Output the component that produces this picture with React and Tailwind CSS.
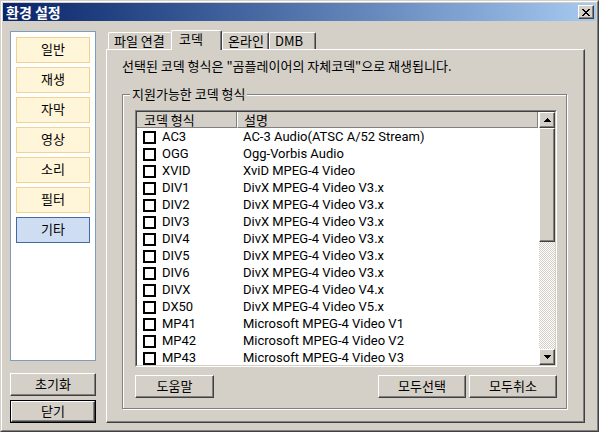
import { useState } from "react";

const categories = ["일반", "재생", "자막", "영상", "소리", "필터", "기타"];

const tabs = [
  { name: "파일 연결", width: "w-[63px]" },
  { name: "코덱", width: "w-[51px]" },
  { name: "온라인", width: "w-[47px]" },
  { name: "DMB", width: "w-[47px]" },
];

const codecs = [
  ["AC3", "AC-3 Audio(ATSC A/52 Stream)"],
  ["OGG", "Ogg-Vorbis Audio"],
  ["XVID", "XviD MPEG-4 Video"],
  ["DIV1", "DivX MPEG-4 Video V3.x"],
  ["DIV2", "DivX MPEG-4 Video V3.x"],
  ["DIV3", "DivX MPEG-4 Video V3.x"],
  ["DIV4", "DivX MPEG-4 Video V3.x"],
  ["DIV5", "DivX MPEG-4 Video V3.x"],
  ["DIV6", "DivX MPEG-4 Video V3.x"],
  ["DIVX", "DivX MPEG-4 Video V4.x"],
  ["DX50", "DivX MPEG-4 Video V5.x"],
  ["MP41", "Microsoft MPEG-4 Video V1"],
  ["MP42", "Microsoft MPEG-4 Video V2"],
  ["MP43", "Microsoft MPEG-4 Video V3"],
];

const raised =
  "border border-t-white border-l-white border-r-[#404040] border-b-[#404040] bg-[#d4d0c8] shadow-[inset_-1px_-1px_0_#808080]";

function PushButton({ className, children }) {
  return (
    <button type="button" className={`flex h-[23px] shrink-0 items-center justify-center pb-[2px] ${raised} ${className}`}>
      {children}
    </button>
  );
}

function ScrollButton({ label, points }) {
  return (
    <button type="button" aria-label={label} className={`flex h-4 w-full shrink-0 items-center justify-center ${raised}`}>
      <svg width="7" height="4" viewBox="0 0 7 4" shapeRendering="crispEdges" aria-hidden="true">
        <path d={points} fill="#000" />
      </svg>
    </button>
  );
}

function Tab({ name, width, active, beforeActive, onSelect }) {
  return (
    <button
      type="button"
      role="tab"
      aria-selected={active}
      onClick={onSelect}
      className={`${width} shrink-0 rounded-t-[2px] border-t border-l border-t-white border-l-white bg-[#d4d0c8] whitespace-nowrap text-left ${
        beforeActive ? "" : "border-r border-r-[#404040] shadow-[inset_-1px_0_0_#808080]"
      } ${active ? "z-10 -mb-px h-5 px-[7px] pb-1" : "h-[17px] px-[5px]"}`}
    >
      {name}
    </button>
  );
}

function CodecList() {
  return (
    <div className="flex min-h-0 flex-1 border border-t-[#808080] border-l-[#808080] border-r-white border-b-white">
      <div className="flex min-h-0 min-w-0 flex-1 border border-t-[#404040] border-l-[#404040] border-r-[#d4d0c8] border-b-[#d4d0c8] bg-white">
        <div className="min-w-0 flex-1 overflow-hidden">
          <table className="w-full table-fixed border-separate border-spacing-0 text-left">
            <thead>
              <tr className="h-4 bg-[#d4d0c8] leading-[15px]">
                <th className="w-[100px] border-r border-b border-[#808080] p-0 pl-[7px] font-normal">코덱 형식</th>
                <th className="border-r border-b border-l border-r-[#808080] border-b-[#808080] border-l-white p-0 pl-[6px] font-normal">
                  설명
                </th>
              </tr>
            </thead>
            <tbody className="font-[Roboto,'Noto_Sans_CJK_KR',sans-serif]">
              {codecs.map(([code, description]) => (
                <tr key={code} className="h-[17px] leading-[17px]">
                  <td className="p-0 pl-[6px]">
                    <label className="flex h-[17px] items-center gap-[6px]">
                      <input type="checkbox" className="mt-px size-[13px] appearance-none border-2 border-black bg-white checked:bg-black" />
                      {code}
                    </label>
                  </td>
                  <td className="p-0 pl-[6px] whitespace-nowrap">{description}</td>
                </tr>
              ))}
            </tbody>
          </table>
        </div>
        <div className="ml-px flex w-4 shrink-0 flex-col bg-[repeating-conic-gradient(#d4d0c8_0_25%,#ffffff_0_50%)] bg-size-[2px_2px]">
          <ScrollButton label="위로" points="M3 0h1v1h1v1h1v1h1v1H0V3h1V2h1V1h1z" />
          <div className={`h-[114px] ${raised}`} />
          <div className="flex-1" />
          <ScrollButton label="아래로" points="M0 0h7v1H6v1H5v1H4v1H3V3H2V2H1V1H0z" />
        </div>
      </div>
    </div>
  );
}

export default function App() {
  const [category, setCategory] = useState("기타");
  const [tab, setTab] = useState("코덱");

  return (
    <div className="flex h-screen min-h-[400px] flex-col border border-t-[#d4d0c8] border-l-[#d4d0c8] border-r-[#404040] border-b-[#404040] bg-[#d4d0c8] font-['Noto_Sans_CJK_KR',sans-serif] text-[13px] leading-4 text-black">
      <div className="flex min-h-0 flex-1 flex-col border border-t-white border-l-white border-r-[#808080] border-b-[#808080] p-px">
        <header className="flex h-[18px] shrink-0 items-center justify-between bg-linear-to-r from-[#0a246a] to-[#a6caf0] pr-[2px] pl-[3px]">
          <h1 className="pb-px text-sm leading-4 font-bold text-white">환경 설정</h1>
          <button type="button" aria-label="닫기" className={`flex h-[14px] w-4 items-center justify-center ${raised}`}>
            <svg width="8" height="7" viewBox="0 0 8 7" shapeRendering="crispEdges" aria-hidden="true">
              <path
                d="M0 0h2v1h1v1h2V1h1V0h2v1H7v1H6v1H5v1h1v1h1v1h1v1H6V6H5V5H3v1H2v1H0V6h1V5h1V4h1V3H2V2H1V1H0z"
                fill="#000"
              />
            </svg>
          </button>
        </header>

        <div className="flex min-h-0 flex-1 gap-[10px] pr-[11px] pb-[6px] pl-[7px]">
          <aside className="flex w-[86px] shrink-0 flex-col pt-[10px]">
            <nav className="mb-3 flex flex-1 flex-col gap-1 border border-[#7f9db9] bg-white p-[5px]">
              {categories.map((name) => (
                <button
                  key={name}
                  type="button"
                  aria-pressed={name === category}
                  onClick={() => setCategory(name)}
                  className={`h-[26px] border pb-[2px] ${
                    name === category ? "border-[#4169a5] bg-[#cfddf3]" : "border-[#f3d193] bg-[#fff5d9]"
                  }`}
                >
                  {name}
                </button>
              ))}
            </nav>
            <PushButton className="mb-1">초기화</PushButton>
            <div className="flex border border-black">
              <button type="button" className={`flex h-[21px] flex-1 items-center justify-center pb-[2px] ${raised}`}>
                닫기
              </button>
            </div>
          </aside>

          <main className="flex min-w-0 flex-1 flex-col pt-[9px]">
            <div role="tablist" className="flex h-[19px] shrink-0 items-end pl-[2px]">
              {tabs.map(({ name, width }, index) => (
                <Tab
                  key={name}
                  name={name}
                  width={width}
                  active={name === tab}
                  beforeActive={tabs[index + 1]?.name === tab}
                  onSelect={() => setTab(name)}
                />
              ))}
            </div>
            <section className={`flex min-h-0 flex-1 flex-col px-[15px] pt-2 pb-[13px] ${raised}`}>
              <p className="h-4">선택된 코덱 형식은 "곰플레이어의 자체코덱"으로 재생됩니다.</p>
              <fieldset className="mt-3 mr-[2px] flex min-h-0 min-w-0 flex-1 flex-col border border-[#808080] pt-2 pr-[9px] pb-[10px] pl-3 shadow-[1px_1px_0_#fff,inset_1px_1px_0_#fff]">
                <legend className="-ml-[5px] bg-[#d4d0c8] px-[2px]">지원가능한 코덱 형식</legend>
                <CodecList />
                <div className="mt-2 flex shrink-0 gap-[3px]">
                  <PushButton className="mr-auto w-[79px]">도움말</PushButton>
                  <PushButton className="w-[88px]">모두선택</PushButton>
                  <PushButton className="w-[88px]">모두취소</PushButton>
                </div>
              </fieldset>
            </section>
          </main>
        </div>
      </div>
    </div>
  );
}
